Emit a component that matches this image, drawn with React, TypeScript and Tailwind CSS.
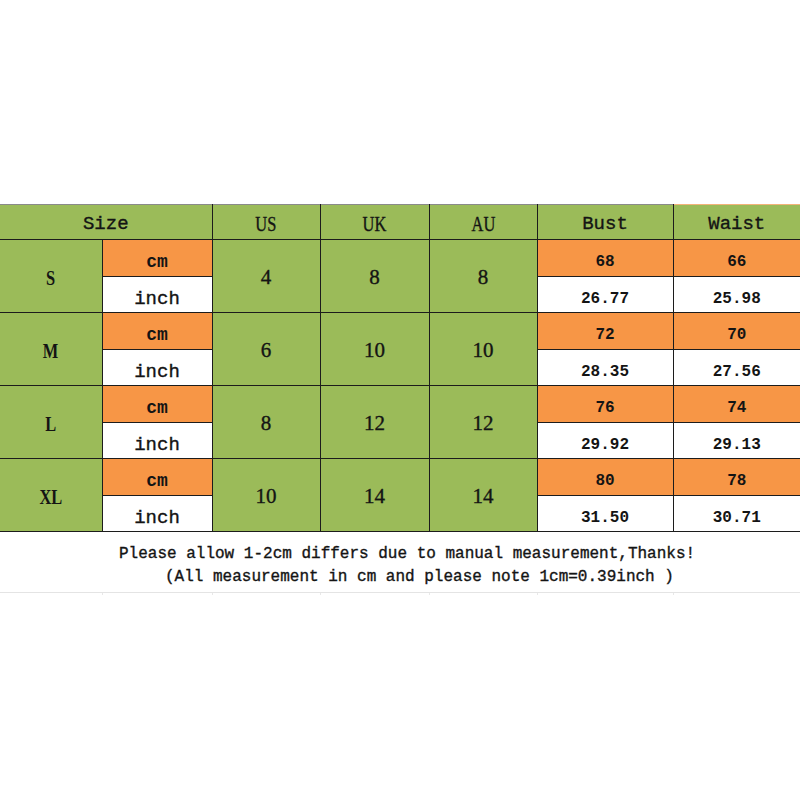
const ROWS = [
  { size: "S", us: "4", uk: "8", au: "8", bust: ["68", "26.77"], waist: ["66", "25.98"] },
  { size: "M", us: "6", uk: "10", au: "10", bust: ["72", "28.35"], waist: ["70", "27.56"] },
  { size: "L", us: "8", uk: "12", au: "12", bust: ["76", "29.92"], waist: ["74", "29.13"] },
  { size: "XL", us: "10", uk: "14", au: "14", bust: ["80", "31.50"], waist: ["78", "30.71"] },
];

const mono = "font-['Liberation_Mono',monospace]";
const serif = "font-['Liberation_Serif',serif]";
const cell = "border border-[#1c1c1c] p-0 pt-[4px] text-center align-middle text-[#141414]";
const sub = "border border-[#1c1c1c] p-0 pt-[8px] leading-[20px] text-center align-middle text-[#141414]";
const green = "bg-[#9bbb59]";
const orange = "bg-[#f79646]";
const heavy = "[-webkit-text-stroke:0.35px_#141414]";

function Narrow({ children }: { children: React.ReactNode }) {
  return <span className="inline-block scale-x-[0.82]">{children}</span>;
}

export default function App() {
  return (
    <div className="h-[800px] w-[800px] overflow-hidden bg-white pt-[204px]">
      <table className="w-[800px] table-fixed border-collapse">
        <colgroup>
          <col className="w-[102px]" />
          <col className="w-[110px]" />
          <col className="w-[108px]" />
          <col className="w-[109px]" />
          <col className="w-[108px]" />
          <col className="w-[136px]" />
          <col className="w-[127px]" />
        </colgroup>
        <thead>
          <tr className="h-[35px]">
            <td colSpan={2} className={`${cell} ${green} ${mono} ${heavy} border-l-0 border-t-[#8a8a8a] text-[19px]`}>
              Size
            </td>
            <td className={`${cell} ${green} ${serif} ${heavy} border-t-[#8a8a8a] text-[20px]`}>
              <Narrow>US</Narrow>
            </td>
            <td className={`${cell} ${green} ${serif} ${heavy} border-t-[#8a8a8a] text-[20px]`}>
              <Narrow>UK</Narrow>
            </td>
            <td className={`${cell} ${green} ${serif} ${heavy} border-t-[#8a8a8a] text-[20px]`}>
              <Narrow>AU</Narrow>
            </td>
            <td className={`${cell} ${green} ${mono} ${heavy} border-t-[#8a8a8a] text-[19px]`}>Bust</td>
            <td className={`${cell} ${green} ${mono} ${heavy} border-r-0 border-t-[#f3b27a] text-[19px]`}>
              Waist
            </td>
          </tr>
        </thead>
        <tbody>
          {ROWS.map((r) => (
            <>
              <tr key={r.size + "cm"} className="h-[37px]">
                <td rowSpan={2} className={`${cell} ${green} ${serif} border-l-0 text-[20px] font-bold`}>
                  <Narrow>{r.size}</Narrow>
                </td>
                <td className={`${sub} ${orange} ${mono} text-[18px] font-bold text-[#3a1c08]`}>cm</td>
                <td rowSpan={2} className={`${cell} ${green} ${serif} ${heavy} text-[21px]`}>
                  {r.us}
                </td>
                <td rowSpan={2} className={`${cell} ${green} ${serif} ${heavy} text-[21px]`}>
                  {r.uk}
                </td>
                <td rowSpan={2} className={`${cell} ${green} ${serif} ${heavy} text-[21px]`}>
                  {r.au}
                </td>
                <td className={`${sub} ${orange} ${mono} text-[16px] font-bold`}>{r.bust[0]}</td>
                <td className={`${sub} ${orange} ${mono} border-r-0 text-[16px] font-bold`}>{r.waist[0]}</td>
              </tr>
              <tr key={r.size + "in"} className="h-[36px]">
                <td className={`${sub} bg-white ${mono} ${heavy} text-[19px]`}>inch</td>
                <td className={`${sub} bg-white ${mono} text-[16px] font-bold`}>{r.bust[1]}</td>
                <td className={`${sub} bg-white ${mono} border-r-0 text-[16px] font-bold`}>{r.waist[1]}</td>
              </tr>
            </>
          ))}
        </tbody>
      </table>

      <div className={`${mono} ${heavy} pt-[11px] text-[16px] leading-[23px] text-[#141414]`}>
        <p className="pl-[119px]">Please allow 1-2cm differs due to manual measurement,Thanks!</p>
        <p className="pl-[165px]">(All measurement in cm and please note 1cm=0.39inch )</p>
      </div>

      <div className="mt-[3px] grid h-[3px] grid-cols-[102px_110px_108px_109px_108px_136px_127px] border-t border-[#e4e4e4]">
        <div />
        <div className="border-l border-[#e8e8e8]" />
        <div className="border-l border-[#e8e8e8]" />
        <div className="border-l border-[#e8e8e8]" />
        <div className="border-l border-[#e8e8e8]" />
        <div className="border-l border-[#e8e8e8]" />
        <div className="border-l border-[#e8e8e8]" />
      </div>
    </div>
  );
}
